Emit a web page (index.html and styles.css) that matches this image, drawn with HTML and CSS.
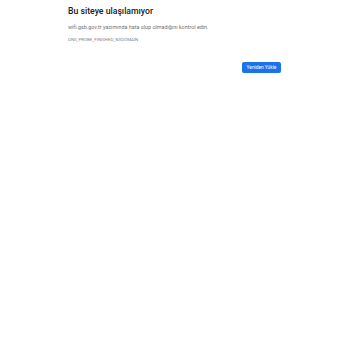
FILE: index.html
```html
<!DOCTYPE html>
<html lang="tr">
<head>
<meta charset="utf-8">
<link rel="stylesheet" href="styles.css">
</head>
<body>
<div class="main">
  <h1 class="title">Bu siteye ulaşılamıyor</h1>
  <p class="desc">wifi.gsb.gov.tr yazımında hata olup olmadığını kontrol edin.</p>
  <div class="code">DNS_PROBE_FINISHED_NXDOMAIN</div>
  <div class="actions">
    <button class="reload">Yeniden Yükle</button>
  </div>
</div>
</body>
</html>
```
FILE: styles.css
```css
html, body {
  margin: 0;
  padding: 0;
  background: #fff;
}
body {
  font-family: Roboto, "Liberation Sans", sans-serif;
  color: #6f7377;
}
.main {
  width: 213px;
  margin-left: 68px;
  padding-top: 6px;
}
.title {
  margin: 0;
  font-size: 8.7px;
  line-height: 10px;
  font-weight: 500;
  color: #202124;
}
.desc {
  margin: 8px 0 0;
  font-size: 5.4px;
  line-height: 7px;
}
.code {
  margin-top: 6px;
  font-size: 4.4px;
  line-height: 5px;
  color: #80868b;
  text-transform: uppercase;
}
.actions {
  display: flex;
  justify-content: flex-end;
  margin-top: 20px;
}
.reload {
  background: #1a73e8;
  color: #fff;
  border: none;
  border-radius: 2px;
  font-family: Roboto, "Liberation Sans", sans-serif;
  font-size: 4.8px;
  font-weight: 400;
  width: 39px;
  height: 11px;
  padding: 0;
}
```
